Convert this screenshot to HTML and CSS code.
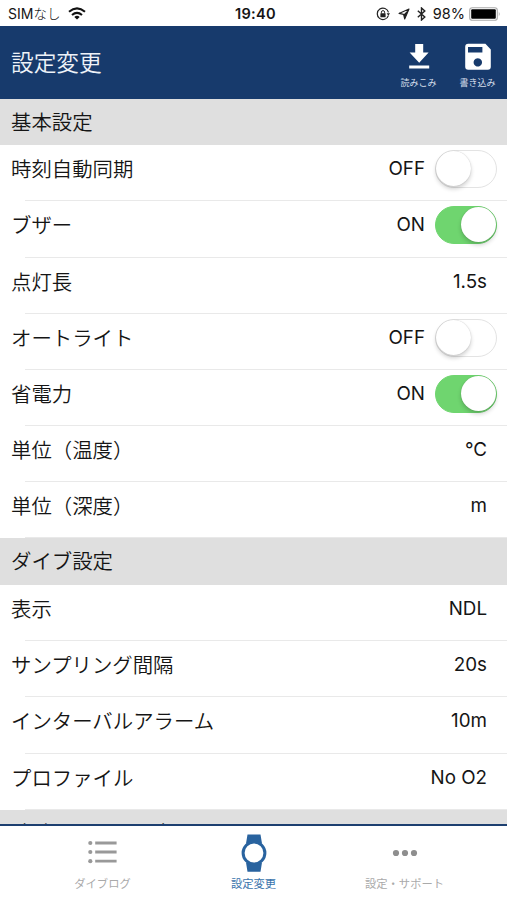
FILE: index.html
```html
<!DOCTYPE html>
<html lang="ja">
<head>
<meta charset="utf-8">
<title>設定変更</title>
<link rel="stylesheet" href="styles.css">
</head>
<body>
<div class="app">
  <div class="status">
    <div class="status-left">
      <span class="carrier">SIM<span class="carrier-ja">なし</span></span>
      <svg width="18" height="13" viewBox="0 0 18 13"><g fill="none" stroke="#111" stroke-width="2.1"><path d="M1 4.8Q9-2 17 4.8"/><path d="M4 8Q9 3.7 14 8"/></g><path d="M6.3 9.9Q9 7.6 11.7 9.9L9 12.6Z" fill="#111"/></svg>
    </div>
    <span class="clock">19:40</span>
    <div class="status-right">
      <svg width="14" height="14" viewBox="0 0 14 14"><path d="M12.4 8.6A5.7 5.7 0 1 1 12.5 5.4" fill="none" stroke="#222" stroke-width="1.2"/><path d="M10.6 6.2h3.4l-1.6 2.5z" fill="#222"/><rect x="4.4" y="6.3" width="5.2" height="3.9" rx=".5" fill="#222"/><path d="M5.4 6.5V5.2a1.6 1.6 0 0 1 3.2 0v1.3" fill="none" stroke="#222"/></svg>
      <svg class="nav" width="12" height="12" viewBox="0 0 12 12"><path d="M11 1L6.7 11L5.6 6.4L1 5.4Z" fill="none" stroke="#222" stroke-width="1.1" stroke-linejoin="round"/><path d="M11 1L6.7 11L5.6 6.4Z" fill="#222"/></svg>
      <svg class="bt" width="9" height="14" viewBox="0 0 9 14"><path d="M.8 3.8L7.8 10L4.5 13V1L7.8 4L.8 10.2" fill="none" stroke="#222" stroke-width="1.4"/></svg>
      <span class="percent">98%</span>
      <svg class="battery" width="32" height="14" viewBox="0 0 32 14"><rect x=".7" y=".7" width="27.6" height="12.6" rx="2.6" fill="#fff" stroke="#aaa" stroke-width="1.1"/><rect x="2.2" y="2.2" width="24.6" height="9.6" rx="1" fill="#000"/><path d="M29.8 4.6q1.8 2.4 0 4.8z" fill="#aaa"/></svg>
    </div>
  </div>
  <header class="header">
    <h1>設定変更</h1>
    <button class="action">
      <svg width="28" height="28" viewBox="0 0 28 28" fill="#fff"><path d="M10.2 2h8v8.5h5.4L14.2 20.7 4.6 10.5h5.6zM4.2 23.5h20v2.9h-20z"/></svg>
      <span>読みこみ</span>
    </button>
    <button class="action">
      <svg width="28" height="28" viewBox="0 0 28 28" fill="#fff"><path fill-rule="evenodd" d="M4.2 1.8h17.2l5.4 5.6v17.4a3 3 0 0 1-3 3H4.2a3 3 0 0 1-3-3v-20a3 3 0 0 1 3-3zM4 5.1v5.5h14.4V5.1zM13.8 16.2a4.2 4.2 0 1 0 .01 0z"/></svg>
      <span>書き込み</span>
    </button>
  </header>
  <main class="list">
    <h2>基本設定</h2>
    <div class="row"><span>時刻自動同期</span><b>OFF</b><i class="toggle"></i></div>
    <div class="row"><span>ブザー</span><b>ON</b><i class="toggle on"></i></div>
    <div class="row"><span>点灯長</span><b>1.5s</b></div>
    <div class="row"><span>オートライト</span><b>OFF</b><i class="toggle"></i></div>
    <div class="row"><span>省電力</span><b>ON</b><i class="toggle on"></i></div>
    <div class="row"><span>単位（温度）</span><b>°C</b></div>
    <div class="row"><span>単位（深度）</span><b>m</b></div>
    <h2>ダイブ設定</h2>
    <div class="row"><span>表示</span><b>NDL</b></div>
    <div class="row"><span>サンプリング間隔</span><b>20s</b></div>
    <div class="row"><span>インターバルアラーム</span><b>10m</b></div>
    <div class="row"><span>プロファイル</span><b>No O2</b></div>
    <h2>時計アラーム設定</h2>
  </main>
  <nav class="tabs">
    <div class="tab"><svg width="30" height="38" viewBox="0 0 30 38" fill="#999"><circle cx="2.3" cy="9" r="2.1"/><circle cx="2.3" cy="18" r="2.1"/><circle cx="2.3" cy="27.2" r="2.1"/><path d="M7.2 7.6h21.4v2.8H7.2zM7.2 16.6h21.4v2.8H7.2zM7.2 25.8h21.4v2.8H7.2z"/></svg><span>ダイブログ</span></div>
    <div class="tab active"><svg width="26" height="38" viewBox="0 0 26 38"><path d="M6.5 .5h13l1.5 9H5zM5 28.5h16l-1.5 9.2h-13z" fill="#29639f"/><circle cx="13" cy="19" r="10.9" fill="#fff" stroke="#29639f" stroke-width="3"/></svg><span>設定変更</span></div>
    <div class="tab"><svg width="26" height="38" viewBox="0 0 26 38" fill="#8e8e8e"><circle cx="4" cy="19" r="3.1"/><circle cx="13" cy="19" r="3.1"/><circle cx="22" cy="19" r="3.1"/></svg><span>設定・サポート</span></div>
  </nav>
</div>
</body>
</html>
```

FILE: styles.css
```css
* { box-sizing: border-box; }
body { margin: 0; background: #fff; color: #151515; font-family: Inter, "Noto Sans CJK JP", sans-serif; }
.app { width: 507px; height: 900px; display: flex; flex-direction: column; overflow: hidden; }
svg { display: block; flex: none; }

.status { height: 25.5px; flex: none; display: grid; grid-template-columns: 1fr auto 1fr; align-items: center; padding: 2px 6px 0 8px; font-size: 14.5px; line-height: 20px; }
.status-left, .status-right { display: flex; align-items: center; }
.status-left { gap: 8px; }
.carrier { font-size: 14px; white-space: nowrap; }
.carrier-ja { font-size: 13.5px; font-weight: 300; }
.clock { font-weight: 600; font-size: 14.6px; letter-spacing: .3px; position: relative; left: 1px; }
.status-right { justify-content: flex-end; }
.nav { margin-left: 8px; }
.bt { margin-left: 7px; }
.percent { margin-left: 7px; }
.battery { margin-left: 4px; }

.header { height: 73px; flex: none; display: flex; background: #173a6c; color: #fff; padding-left: 11px; }
h1 { flex: 1; margin: 0; font-size: 22.7px; font-weight: 350; line-height: 73px; color: #eef2f8; }
.action { width: 59px; margin: 0; padding: 16px 0 0; border: 0; background: none; color: #d5deea; font: 9px/14px "Noto Sans CJK JP", sans-serif; display: flex; flex-direction: column; align-items: center; gap: 6px; }

.list { flex: 1; min-height: 0; overflow: hidden; }
h2 { margin: 0; height: 46.8px; padding: 0 11px; background: #dfdfdf; font-size: 20.4px; font-weight: 350; line-height: 48px; }
.row { height: 56.15px; display: flex; padding: 0 10px 0 11px; line-height: 47px; font-size: 20.4px; background: linear-gradient(#e9e9e9, #e9e9e9) 25px 100% / 100% 1px no-repeat; }
.row span { flex: 1; font-weight: 350; line-height: 49px; }
.row b { font-weight: 400; font-size: 18.8px; line-height: 48px; margin-right: 10px; }
.toggle { width: 62px; height: 38px; margin-top: 5px; border: 1.5px solid #e3e3e3; border-radius: 19px; display: flex; flex: none; }
.toggle::before { content: ""; width: 35px; height: 35px; border-radius: 50%; background: #fff; box-shadow: 0 3px 4px rgba(0,0,0,.18), 0 0 1px rgba(0,0,0,.25); }
.toggle.on { background: #6fd56f; border-color: #6fd56f; justify-content: flex-end; }

.tabs { height: 76px; flex: none; display: grid; grid-template-columns: repeat(3, 151px); justify-content: center; border-top: 2.5px solid #1d3f70; background: #fff; padding-top: 7.5px; }
.tab { display: flex; flex-direction: column; align-items: center; gap: 3px; font-size: 11.3px; line-height: 18px; color: #aaa; }
.active { color: #3973ac; }
```
